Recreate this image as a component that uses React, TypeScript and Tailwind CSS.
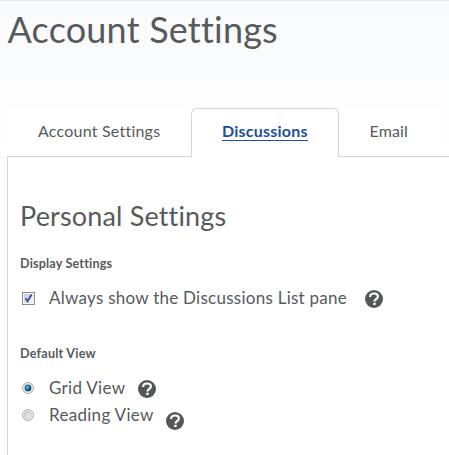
import React from "react";

function HelpIcon() {
  return (
    <svg className="block h-[18px] w-[18px] shrink-0" viewBox="0 0 18 18" role="img" aria-label="Help">
      <circle cx="9" cy="9" r="9" fill="#545759" />
      <path
        d="M5.1 6.9C5.1 4.7 6.8 3.5 9 3.5c2.3 0 3.9 1.1 3.9 3.1 0 2.4-3.4 2.4-3.4 4.9"
        fill="none"
        stroke="#fff"
        strokeWidth="2.2"
      />
      <rect x="8.2" y="12.7" width="2.5" height="2.4" rx="0.4" fill="#fff" />
    </svg>
  );
}

function Checkbox() {
  return (
    <svg className="block h-[13px] w-[13px] shrink-0" viewBox="0 0 13 13" role="checkbox" aria-checked="true">
      <defs>
        <linearGradient id="boxFill" x1="0" y1="0" x2="1" y2="1">
          <stop offset="0" stopColor="#c5cad2" />
          <stop offset="1" stopColor="#f7f7f8" />
        </linearGradient>
      </defs>
      <rect x="0.5" y="0.5" width="12" height="12" fill="#f4f4f4" stroke="#8a8c8d" />
      <rect x="2" y="2" width="9" height="9" fill="url(#boxFill)" />
      <path d="M3.5 6.2 5.6 9.2 9.6 2.6" fill="none" stroke="#3453a1" strokeWidth="2" />
    </svg>
  );
}

function Radio({ checked }: { checked: boolean }) {
  return (
    <svg className="block h-3 w-3 shrink-0" viewBox="0 0 12 12" role="radio" aria-checked={checked}>
      <defs>
        <linearGradient id="ring" x1="0" y1="0" x2="1" y2="1">
          <stop offset="0" stopColor="#c3c6ca" />
          <stop offset="1" stopColor="#f5f5f5" />
        </linearGradient>
        <radialGradient id="dot" cx="0.42" cy="0.4" r="0.6">
          <stop offset="0" stopColor="#62cdf5" />
          <stop offset="0.5" stopColor="#1978ab" />
          <stop offset="1" stopColor="#0b3556" />
        </radialGradient>
      </defs>
      <circle cx="6" cy="6" r="5.5" fill="#fafafa" stroke="#8e9192" strokeWidth="0.8" />
      <circle cx="6" cy="6" r="3.9" fill="url(#ring)" stroke="#b9bcc0" strokeWidth="0.6" />
      {checked && <circle cx="6" cy="6" r="3.2" fill="url(#dot)" />}
    </svg>
  );
}

export default function App() {
  return (
    <div className="h-[455px] w-[449px] overflow-hidden border-t border-[#e6e6ef] bg-linear-to-b from-[#f9fafc] to-white to-[160px] font-['Lato',sans-serif] text-[#565a5c] [font-variant-ligatures:none]">
      <h1 className="h-[107px] pt-[6px] pl-[7.5px] text-[36px] leading-[44px] tracking-[0.2px] whitespace-nowrap">Account Settings</h1>
      <nav className="ml-[7px] flex h-[49px] text-[16px] leading-[20px] whitespace-nowrap">
        <div className="w-[184px] border-b border-[#d3d5e2] bg-white pt-[13px] pl-[31px] tracking-[0.22px]">Account Settings</div>
        <div className="w-[148px] rounded-t-[6px] border-x border-t border-[#d3d5e2] bg-white pt-[12px] pl-[30px] font-bold tracking-[0.22px] text-[#1d4f9c]">
          <span className="inline-block h-[20px] border-b border-[#1d4f9c]">Discussions</span>
        </div>
        <div className="w-[100px] border-b border-[#d3d5e2] bg-white pt-[13px] pl-[30.5px] tracking-[0.14px]">Email</div>
        <div className="w-[10px] border-b border-[#d3d5e2]" />
      </nav>
      <main className="ml-[7px] h-[298px] border-l border-[#d3d5e2] bg-white pl-3 whitespace-nowrap">
        <h2 className="pt-[42px] text-[27px] leading-[34px] tracking-[0.16px]">Personal Settings</h2>
        <h3 className="mt-[23px] text-[12.6px] leading-4 font-bold tracking-[0.17px]">Display Settings</h3>
        <div className="mt-[14px] flex h-[24px] items-center pl-[2px] text-[17px] leading-[24px] tracking-[0.26px]">
          <Checkbox />
          <span className="ml-[14px] w-[316px]">Always show the Discussions List pane</span>
          <div className="mt-px">
            <HelpIcon />
          </div>
        </div>
        <h3 className="mt-[36px] text-[12.6px] leading-4 font-bold tracking-[0.22px]">Default View</h3>
        <div className="mt-[14px] flex h-[24px] items-center pl-[2px] text-[17px] leading-[24px] tracking-[0.3px]">
          <Radio checked />
          <span className="ml-[15px] w-[89px]">Grid View</span>
          <div className="mt-[2px]">
            <HelpIcon />
          </div>
        </div>
        <div className="mt-[3px] flex h-[24px] items-center pl-[2px] text-[17px] leading-[24px] tracking-[0.3px]">
          <Radio checked={false} />
          <span className="ml-[15px] w-[117px]">Reading View</span>
          <div className="mt-[11px]">
            <HelpIcon />
          </div>
        </div>
      </main>
    </div>
  );
}
